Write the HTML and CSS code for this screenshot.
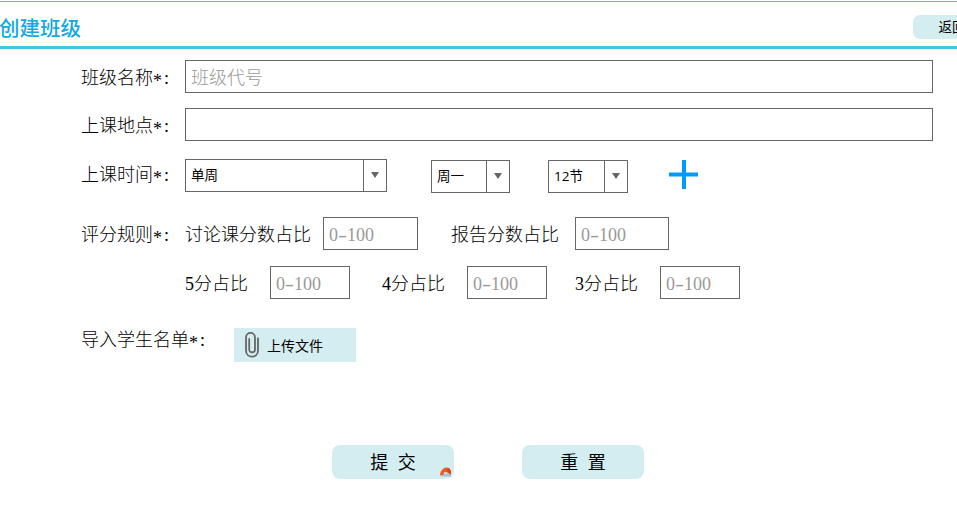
FILE: index.html
```html
<!DOCTYPE html>
<html lang="zh-CN">
<head>
<meta charset="utf-8">
<title>创建班级</title>
<link rel="stylesheet" href="styles.css">
</head>
<body>
<header class="header">
  <h1 class="title">创建班级</h1>
  <button class="back">返回</button>
</header>
<main class="form">
  <div class="row row-name">
    <span class="label">班级名称<i class="star">*</i><i class="colon">:</i></span>
    <div class="input wide">班级代号</div>
  </div>
  <div class="row row-place">
    <span class="label">上课地点<i class="star">*</i><i class="colon">:</i></span>
    <div class="input wide"></div>
  </div>
  <div class="row row-time">
    <span class="label">上课时间<i class="star">*</i><i class="colon">:</i></span>
    <div class="select week"><span class="value">单周</span><span class="arrow"></span></div>
    <div class="select day"><span class="value">周一</span><span class="arrow"></span></div>
    <div class="select period"><span class="value">12节</span><span class="arrow"></span></div>
    <svg class="plus" width="30" height="30" viewBox="0 0 30 30"><path d="M15 0V29M0 14.5H29" stroke="#0099ff" stroke-width="4" fill="none"/></svg>
  </div>
  <div class="row row-rule">
    <span class="label">评分规则<i class="star">*</i><i class="colon">:</i></span>
    <span class="text discuss">讨论课分数占比</span>
    <div class="input mid">0<i class="dash">-</i>100</div>
    <span class="text report">报告分数占比</span>
    <div class="input mid last">0<i class="dash">-</i>100</div>
  </div>
  <div class="row row-score">
    <span class="text score">5分占比</span>
    <div class="input small">0<i class="dash">-</i>100</div>
    <span class="text score four">4分占比</span>
    <div class="input small">0<i class="dash">-</i>100</div>
    <span class="text score three">3分占比</span>
    <div class="input small">0<i class="dash">-</i>100</div>
  </div>
  <div class="row row-import">
    <span class="label import">导入学生名单<i class="star">*</i><i class="colon">:</i></span>
    <button class="upload">
      <svg class="clip" width="16" height="28" viewBox="0 0 16 28"><path d="M14 7.5V19.5C14 27.7 2 27.7 2 19.5V6.5C2 .4 11 .4 11 6.5V18.5C11 22.2 5.2 22.2 5.2 18.5V8" fill="none" stroke="#666" stroke-width="1.8" stroke-linecap="round"/></svg>
      <span>上传文件</span>
    </button>
  </div>
  <div class="actions">
    <button class="action">提&nbsp; 交
      <svg class="mark" width="14" height="12" viewBox="0 0 14 12"><path d="M4 8L12 7V10.5H2Z" fill="#a9bfc3"/><path d="M1 9.5Q1 5 4.5 2.5Q7 1 10 2L12 5V8.5L8.5 6.5L5.5 6L4 9Z" fill="#f05a20"/><path d="M8 3L10 2L12 5V8.5L9 6.5Z" fill="#dc4413"/></svg>
    </button>
    <button class="action">重&nbsp; 置</button>
  </div>
</main>
</body>
</html>
```

FILE: styles.css
```css
* { box-sizing: border-box; }
html { overflow: hidden; }
body {
  margin: 0;
  padding-top: 1px;
  height: 521px;
  overflow: hidden;
  background: #fff;
  color: #000;
  font-family: "Liberation Serif", "Noto Sans CJK SC", sans-serif;
}
i { font-style: normal; }
button {
  border: 0;
  padding: 0;
  background: #d4edf1;
  color: #000;
  font-family: "Open Sans", "Noto Sans CJK SC", sans-serif;
  white-space: nowrap;
}
.header {
  display: flex;
  justify-content: space-between;
  height: 48px;
  border-top: 1px solid #40c8dc;
  border-bottom: 3px solid #40c8dc;
}
.title {
  margin: 10px 0 0 -1px;
  color: #14a9e2;
  font: 500 20.5px/30px "Noto Sans CJK SC", sans-serif;
}
.back {
  flex: none;
  width: 78px;
  height: 24px;
  margin: 13px -34px 0 0;
  border-radius: 7px;
  font-size: 13.5px;
  line-height: 24px;
}
.form { padding-left: 81px; }
.row { display: flex; height: 33px; }
.row-name { margin-top: 11px; }
.row-place { margin-top: 15px; }
.row-time { margin-top: 18px; }
.row-rule { margin-top: 25px; }
.row-score { margin-top: 16px; padding-left: 104px; }
.row-import { margin-top: 29px; height: 34px; }
.label, .text {
  flex: none;
  font-size: 18px;
  font-weight: 300;
  line-height: 37px;
  white-space: nowrap;
}
.label { width: 104px; }
.row-time .label { line-height: 33px; }
.label.import { width: 153px; line-height: 24px; }
.star { display: inline-block; width: 9px; line-height: 1; transform: translateY(3px); }
.colon { display: inline-block; width: 9px; text-align: center; }
.dash { display: inline-block; width: 9px; text-align: center; transform: scaleX(1.5); }
.input {
  flex: none;
  height: 33px;
  padding-left: 5px;
  border: 1px solid #666;
  color: #999;
  font-size: 18px;
  font-weight: 300;
  line-height: 34px;
  white-space: nowrap;
}
.wide { width: 748px; }
.mid { width: 95px; }
.mid.last { width: 94px; }
.small { width: 80px; }
.discuss { width: 138px; }
.report { width: 124px; margin-left: 33px; }
.score { width: 85px; }
.four { margin-left: 32px; }
.three { margin-left: 28px; }
.select {
  display: flex;
  flex: none;
  height: 33px;
  border: 1px solid #666;
  font: 13.5px/30px "Open Sans", "Noto Sans CJK SC", sans-serif;
}
.week { width: 202px; }
.day { width: 79px; margin: 1px 0 0 44px; }
.period { width: 80px; margin: 1px 0 0 38px; }
.value { flex: 1; padding-left: 5px; }
.arrow {
  display: flex;
  justify-content: center;
  width: 23px;
  padding-top: 12px;
  border-left: 1px solid #666;
}
.arrow::after {
  content: "";
  width: 8px;
  height: 6px;
  background: #666;
  clip-path: polygon(0 0, 100% 0, 50% 100%);
}
.plus { flex: none; margin: 1px 0 0 41px; }
.upload {
  display: flex;
  align-items: center;
  width: 122px;
  height: 34px;
  padding-left: 10px;
  border-radius: 1px;
  font-size: 14px;
}
.clip { margin-right: 7px; }
.actions {
  display: flex;
  gap: 68px;
  margin: 83px 0 0 251px;
}
.action {
  position: relative;
  width: 122px;
  height: 34px;
  border-radius: 8px;
  font-size: 18px;
  line-height: 34px;
}
.mark { position: absolute; right: 1px; bottom: 1px; }
```
